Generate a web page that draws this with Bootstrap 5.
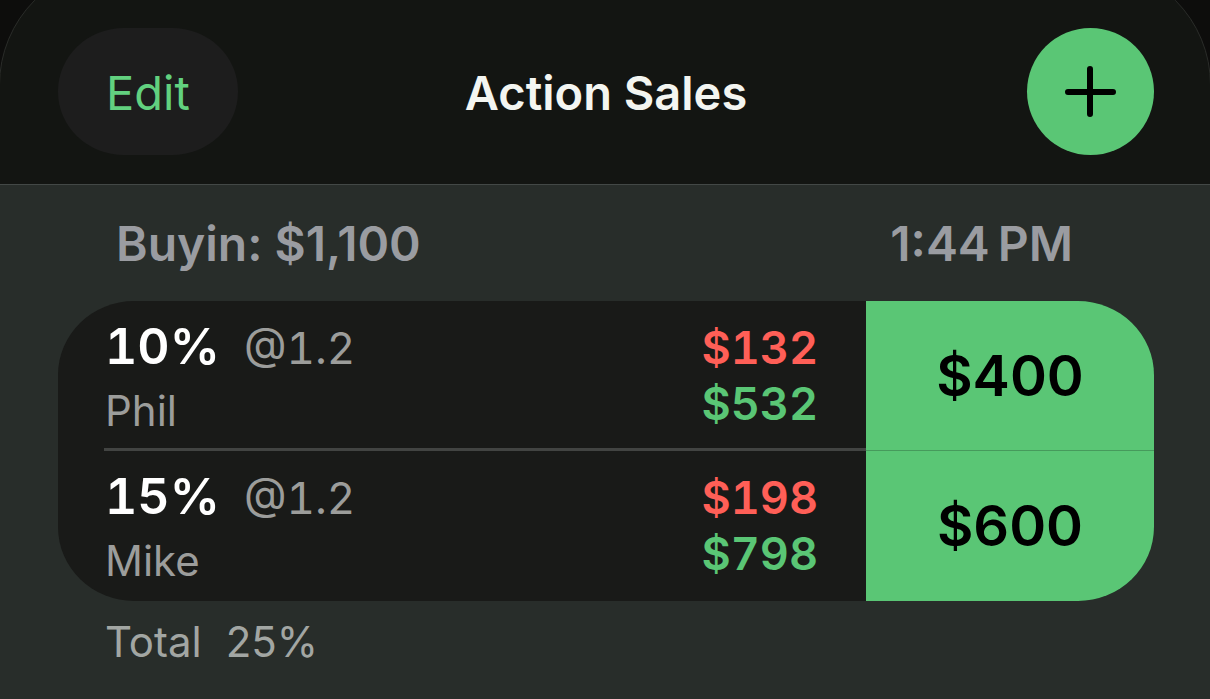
<!DOCTYPE html>
<html lang="en">
<head>
<meta charset="utf-8">
<meta name="viewport" content="width=device-width, initial-scale=1">
<title>Action Sales</title>
<link href="https://cdn.jsdelivr.net/npm/bootstrap@5.3.0/dist/css/bootstrap.min.css" rel="stylesheet">
<style>
  :root { --go: #5ac675; --panel: #282d2a; --cell: #191a18; }
  body { background: var(--panel); font-family: Inter, "Noto Sans", sans-serif; }
  .page-gutter { padding-left: 58px; padding-right: 56px; }

  .top-bar { position: relative; overflow: hidden; background: #0d0d0c; border-bottom: 1px solid #434846; padding-top: 28px; padding-bottom: 29px; }
  /* rounded sheet behind the bar's controls */
  .top-bar::before { content: ""; position: absolute; top: -35px; left: -1px; right: -1px; bottom: -140px; background: #131512; border: 1px solid #2a2c29; border-radius: 120px; }
  .top-bar > * { position: relative; }
  .bar-side { flex: 1 1 0; }
  .bar-title { font-size: 47px; line-height: 60px; padding-top: 2px; font-weight: 600; color: #f3f5f1; }
  .edit-btn { height: 127px; padding: 2px 48px 0; border: 0; background: #1d1d1d; color: #62d17f; font-size: 47px; line-height: 60px; border-radius: 66px / 63px; }
  .add-btn { width: 127px; height: 127px; border: 0; border-radius: 50%; background: var(--go); color: #000; }

  .group-head { padding: 29px 81px 27px 58px; font-size: 48px; line-height: 60px; font-weight: 600; color: #9a9ca1; }
  .sales { border-radius: 76px / 74px; overflow: hidden; background: var(--cell); font-variant-numeric: tabular-nums; }
  .sale { height: 150px; }
  .sale-body { padding: 13px 48px 12px 0; margin-left: 46px; }
  .sale-info { padding-left: 1px; }
  .sale:not(:last-child) .sale-body { border-bottom: 3px solid #424442; padding-bottom: 9px; }
  .sale:not(:last-child) .paid-btn { border-bottom: 1px solid #469a5c; }
  .share { font-size: 50px; line-height: 64px; font-weight: 600; color: #fff; }
  .price { color: #9c9d9b; font-size: 44px; line-height: 64px; }
  .buyer { color: #9c9d9b; font-size: 42px; line-height: 62px; }
  .amounts { padding-top: 6px; }
  .amount { font-size: 45px; line-height: 56px; font-weight: 600; }
  .cost { color: #ff5f57; }
  .worth { color: var(--go); }
  .paid-btn { width: 288px; border: 0; background: var(--go); color: #000; font-size: 56px; font-weight: 600; font-variant-numeric: normal; }
  .group-foot { padding: 11px 47px; font-size: 42px; line-height: 60px; color: #a2a6a3; }
</style>
</head>
<body>
<header class="top-bar page-gutter d-flex align-items-center">
  <div class="bar-side"><button type="button" class="edit-btn">Edit</button></div>
  <h1 class="bar-title mb-0">Action Sales</h1>
  <div class="bar-side d-flex justify-content-end">
    <button type="button" class="add-btn d-flex align-items-center justify-content-center p-0" aria-label="Add sale">
      <svg width="53" height="53" viewBox="0 0 53 53" fill="none" stroke="currentColor" stroke-width="6" stroke-linecap="round" aria-hidden="true"><path d="M26 4v45M4 27h45"/></svg>
    </button>
  </div>
</header>

<main class="page-gutter">
  <div class="group-head d-flex justify-content-between">
    <span>Buyin: $1,100</span>
    <time datetime="13:44">1:44&#8239;PM</time>
  </div>

  <ul class="sales list-unstyled m-0">
    <li class="sale d-flex">
      <div class="sale-body flex-grow-1 d-flex justify-content-between">
        <div class="sale-info">
          <div class="d-flex align-items-baseline gap-4"><span class="share">10%</span><span class="price">@1.2</span></div>
          <div class="buyer">Phil</div>
        </div>
        <div class="amounts text-end">
          <div class="amount cost">$132</div>
          <div class="amount worth">$532</div>
        </div>
      </div>
      <button type="button" class="paid-btn">$400</button>
    </li>
    <li class="sale d-flex">
      <div class="sale-body flex-grow-1 d-flex justify-content-between">
        <div class="sale-info">
          <div class="d-flex align-items-baseline gap-4"><span class="share">15%</span><span class="price">@1.2</span></div>
          <div class="buyer">Mike</div>
        </div>
        <div class="amounts text-end">
          <div class="amount cost">$198</div>
          <div class="amount worth">$798</div>
        </div>
      </div>
      <button type="button" class="paid-btn">$600</button>
    </li>
  </ul>

  <div class="group-foot d-flex gap-4"><span>Total</span><span>25%</span></div>
</main>
<script src="https://cdn.jsdelivr.net/npm/bootstrap@5.3.0/dist/js/bootstrap.bundle.min.js"></script>
</body>
</html>
